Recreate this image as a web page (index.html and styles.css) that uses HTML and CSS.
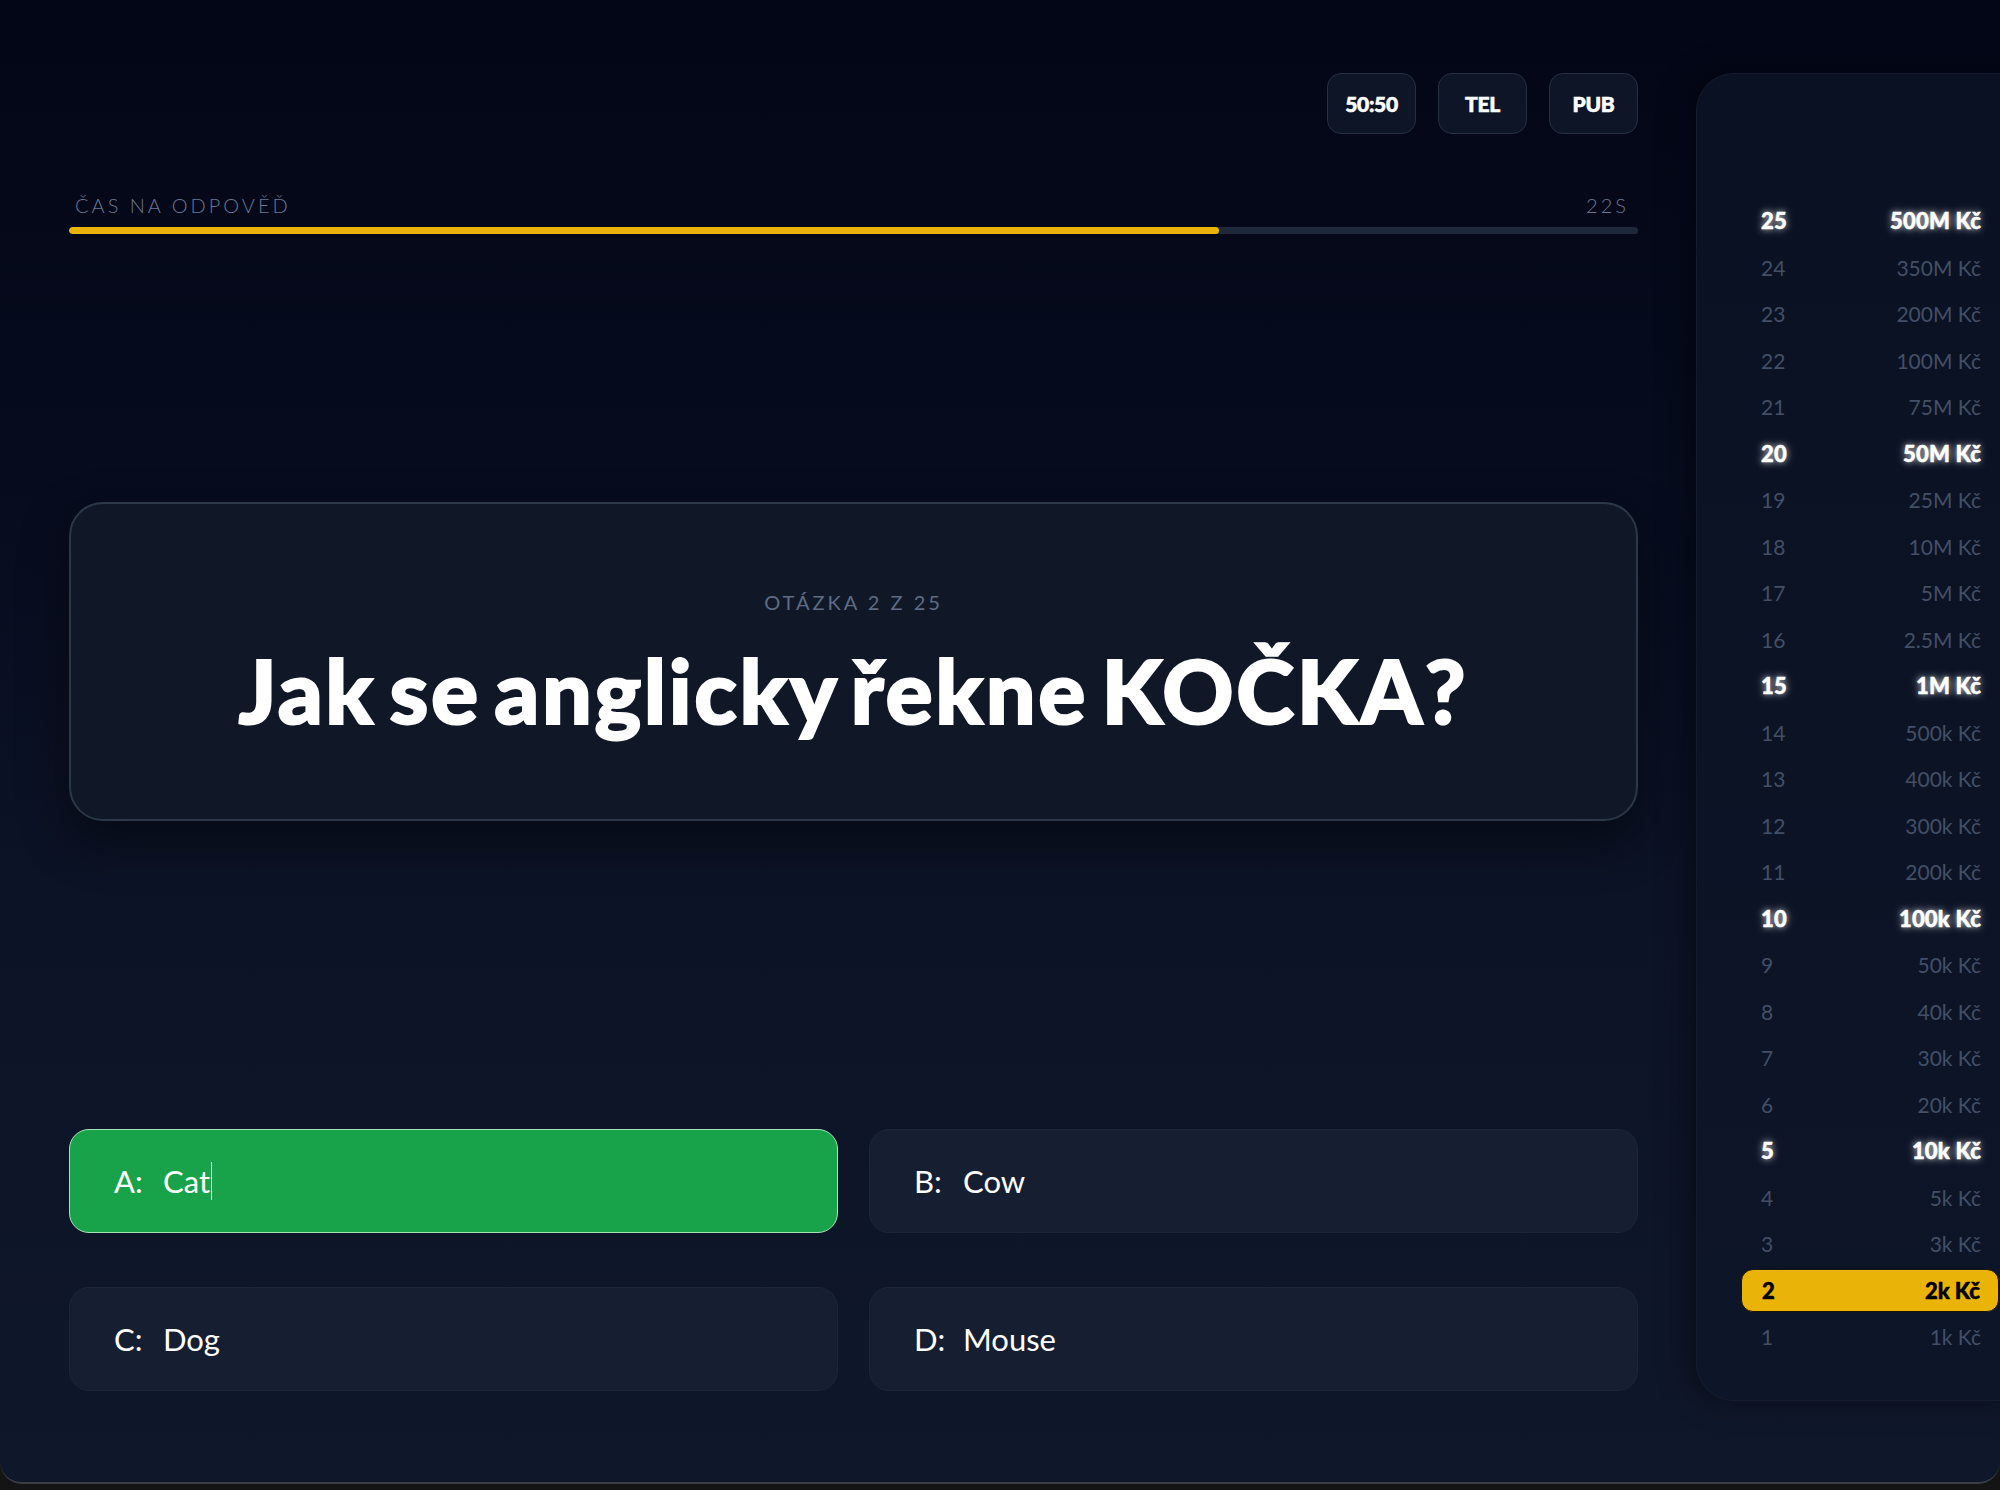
FILE: index.html
```html
<!DOCTYPE html>
<html lang="cs">
<head>
<meta charset="utf-8">
<title>Milionář</title>
<link rel="stylesheet" href="styles.css">
</head>
<body>
<div class="app">
  <main class="main">
    <div class="lifelines">
      <button class="lifeline">50:50</button>
      <button class="lifeline">TEL</button>
      <button class="lifeline">PUB</button>
    </div>
    <div class="timer">
      <div class="timer-labels">
        <span>ČAS NA ODPOVĚĎ</span>
        <span>22S</span>
      </div>
      <div class="timer-track"><div class="timer-fill" style="width: 73.3%"></div></div>
    </div>
    <section class="question">
      <div class="question-count">OTÁZKA 2 Z 25</div>
      <h1 class="question-text">Jak se anglicky řekne KOČKA?</h1>
    </section>
    <div class="answers">
      <div class="answer answer-correct"><span class="answer-key">A:</span><span class="answer-val">Cat</span><span class="caret"></span></div>
      <div class="answer"><span class="answer-key">B:</span><span class="answer-val">Cow</span></div>
      <div class="answer"><span class="answer-key">C:</span><span class="answer-val">Dog</span></div>
      <div class="answer"><span class="answer-key">D:</span><span class="answer-val">Mouse</span></div>
    </div>
  </main>
  <aside class="ladder">
    <div class="rung milestone"><span>25</span><span>500M Kč</span></div>
    <div class="rung"><span>24</span><span>350M Kč</span></div>
    <div class="rung"><span>23</span><span>200M Kč</span></div>
    <div class="rung"><span>22</span><span>100M Kč</span></div>
    <div class="rung"><span>21</span><span>75M Kč</span></div>
    <div class="rung milestone"><span>20</span><span>50M Kč</span></div>
    <div class="rung"><span>19</span><span>25M Kč</span></div>
    <div class="rung"><span>18</span><span>10M Kč</span></div>
    <div class="rung"><span>17</span><span>5M Kč</span></div>
    <div class="rung"><span>16</span><span>2.5M Kč</span></div>
    <div class="rung milestone"><span>15</span><span>1M Kč</span></div>
    <div class="rung"><span>14</span><span>500k Kč</span></div>
    <div class="rung"><span>13</span><span>400k Kč</span></div>
    <div class="rung"><span>12</span><span>300k Kč</span></div>
    <div class="rung"><span>11</span><span>200k Kč</span></div>
    <div class="rung milestone"><span>10</span><span>100k Kč</span></div>
    <div class="rung"><span>9</span><span>50k Kč</span></div>
    <div class="rung"><span>8</span><span>40k Kč</span></div>
    <div class="rung"><span>7</span><span>30k Kč</span></div>
    <div class="rung"><span>6</span><span>20k Kč</span></div>
    <div class="rung milestone"><span>5</span><span>10k Kč</span></div>
    <div class="rung"><span>4</span><span>5k Kč</span></div>
    <div class="rung"><span>3</span><span>3k Kč</span></div>
    <div class="rung current"><span>2</span><span>2k Kč</span></div>
    <div class="rung"><span>1</span><span>1k Kč</span></div>
  </aside>
</div>
</body>
</html>
```
FILE: styles.css
```css
* { box-sizing: border-box; }

html, body {
  margin: 0;
  padding: 0;
  width: 2000px;
  height: 1490px;
  overflow: hidden;
  background: #141414;
  font-family: "Lato", "Noto Sans", sans-serif;
  color: #ffffff;
}

.app {
  width: 2000px;
  height: 1484px;
  display: flex;
  align-items: flex-start;
  gap: 58px;
  padding-left: 69px;
  overflow: hidden;
  background: linear-gradient(180deg, #030616 0%, #060b1d 30%, #0c1326 60%, #0f172a 100%);
  border-bottom: 2px solid #3a3f47;
  border-radius: 0 0 22px 22px;
}

.main {
  width: 1569px;
  flex: none;
  padding-top: 73px;
}

.lifelines {
  display: flex;
  justify-content: flex-end;
  gap: 22px;
}

.lifeline {
  width: 89px;
  height: 61px;
  border-radius: 14px;
  background: #0d1527;
  border: 1px solid #263043;
  color: #ffffff;
  font-family: "Lato", sans-serif;
  font-weight: 900;
  font-size: 21px;
  letter-spacing: -0.3px;
  -webkit-text-stroke: 0.6px #ffffff;
  padding: 0;
}

.timer {
  margin-top: 59px;
}

.timer-labels {
  display: flex;
  justify-content: space-between;
  padding: 0 9px 0 6px;
  font-size: 20px;
  line-height: 24px;
  font-weight: 300;
  letter-spacing: 3px;
  color: #6b7891;
}

.timer-track {
  margin-top: 10px;
  height: 7px;
  border-radius: 4px;
  background: #1e283a;
  overflow: hidden;
}

.timer-fill {
  height: 100%;
  background: #eab308;
  border-radius: 4px;
}

.question {
  margin-top: 268px;
  height: 319px;
  padding-top: 86px;
  border: 2px solid #2c3748;
  border-radius: 34px;
  background: #101828;
  box-shadow: 0 20px 50px rgba(0, 0, 0, 0.45);
  text-align: center;
}

.question-count {
  font-size: 20px;
  line-height: 24px;
  font-weight: 400;
  letter-spacing: 3px;
  color: #5f6c84;
}

.question-text {
  margin: 26px 0 0;
  font-size: 88px;
  line-height: 100px;
  font-weight: 900;
  letter-spacing: 2.6px;
  word-spacing: -10px;
  -webkit-text-stroke: 2px #ffffff;
  color: #ffffff;
}

.answers {
  margin-top: 308px;
  display: grid;
  grid-template-columns: 1fr 1fr;
  column-gap: 31px;
  row-gap: 54px;
}

.answer {
  height: 104px;
  display: flex;
  align-items: center;
  padding-left: 44px;
  border-radius: 20px;
  background: #161f32;
  border: 1px solid #1c2639;
  font-size: 31px;
  font-weight: 400;
  color: #ffffff;
}

.answer-correct {
  background: #18a34a;
  border: 1px solid #a7e3b8;
}

.answer-key {
  width: 49px;
}

.caret {
  display: inline-block;
  width: 1px;
  height: 38px;
  margin-left: 1px;
  background: #e8f5ec;
}

.ladder {
  flex: none;
  width: 348px;
  height: 1328px;
  margin-top: 73px;
  padding: 125px 44px 0;
  border-radius: 38px;
  border: 1px solid #141c2e;
  background: linear-gradient(180deg, #0a1122 0%, #0d1528 100%);
  box-shadow: -10px 0 30px rgba(0, 0, 0, 0.35);
  display: flex;
  flex-direction: column;
  gap: 3.5px;
}

.rung {
  height: 43px;
  flex: none;
  display: flex;
  justify-content: space-between;
  align-items: center;
  padding: 0 18px 0 20px;
  border-radius: 12px;
  font-size: 21px;
  font-weight: 400;
  color: #434f66;
}

.rung.milestone {
  color: #ffffff;
  font-weight: 900;
  font-size: 22px;
  letter-spacing: 0.2px;
  -webkit-text-stroke: 0.5px #ffffff;
  text-shadow: 0 0 6px rgba(255, 255, 255, 0.75), 0 0 12px rgba(255, 255, 255, 0.35);
}

.rung.current {
  background: #eab308;
  color: #000000;
  font-weight: 900;
  font-size: 22px;
  -webkit-text-stroke: 0.5px #000000;
  border: 1px solid #1a1400;
}
```
